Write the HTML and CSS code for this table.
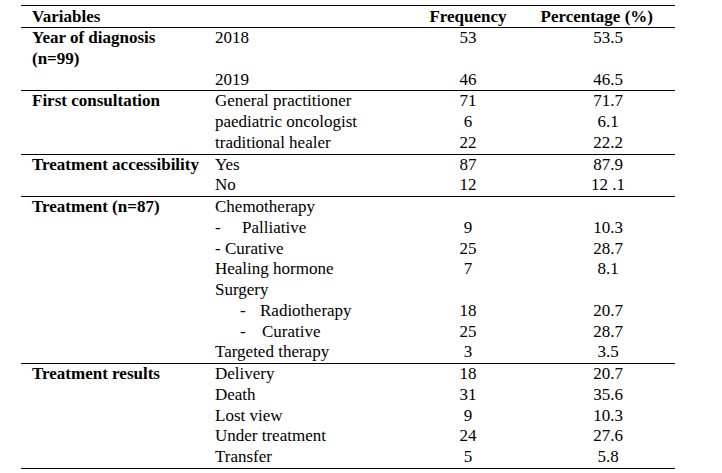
FILE: index.html
```html
<!DOCTYPE html>
<html>
<head>
<meta charset="utf-8">
<link rel="stylesheet" href="styles.css">
</head>
<body>
<table class="tbl">
  <colgroup>
    <col class="c1"><col class="c2"><col class="c3"><col class="c4">
  </colgroup>
  <thead>
    <tr class="head">
      <th class="var">Variables</th>
      <th></th>
      <th class="freq">Frequency</th>
      <th class="pct">Percentage (%)</th>
    </tr>
  </thead>
  <tbody class="grp">
    <tr><td class="label">Year of diagnosis (n=99)</td><td class="cat">2018</td><td class="num">53</td><td class="p">53.5</td></tr>
    <tr><td></td><td class="cat">2019</td><td class="num">46</td><td class="p">46.5</td></tr>
  </tbody>
  <tbody class="grp">
    <tr><td class="label">First consultation</td><td class="cat">General practitioner</td><td class="num">71</td><td class="p">71.7</td></tr>
    <tr><td></td><td class="cat">paediatric oncologist</td><td class="num">6</td><td class="p">6.1</td></tr>
    <tr><td></td><td class="cat">traditional healer</td><td class="num">22</td><td class="p">22.2</td></tr>
  </tbody>
  <tbody class="grp">
    <tr><td class="label">Treatment accessibility</td><td class="cat">Yes</td><td class="num">87</td><td class="p">87.9</td></tr>
    <tr><td></td><td class="cat">No</td><td class="num">12</td><td class="p">12 .1</td></tr>
  </tbody>
  <tbody class="grp">
    <tr><td class="label">Treatment (n=87)</td><td class="cat">Chemotherapy</td><td class="num"></td><td class="p"></td></tr>
    <tr><td></td><td class="cat"><span class="dash d0">-</span>Palliative</td><td class="num">9</td><td class="p">10.3</td></tr>
    <tr><td></td><td class="cat">- Curative</td><td class="num">25</td><td class="p">28.7</td></tr>
    <tr><td></td><td class="cat">Healing hormone</td><td class="num">7</td><td class="p">8.1</td></tr>
    <tr><td></td><td class="cat">Surgery</td><td class="num"></td><td class="p"></td></tr>
    <tr><td></td><td class="cat"><span class="dash d1">-</span>Radiotherapy</td><td class="num">18</td><td class="p">20.7</td></tr>
    <tr><td></td><td class="cat"><span class="dash d1 d2">-</span>Curative</td><td class="num">25</td><td class="p">28.7</td></tr>
    <tr><td></td><td class="cat">Targeted therapy</td><td class="num">3</td><td class="p">3.5</td></tr>
  </tbody>
  <tbody class="grp last">
    <tr><td class="label">Treatment results</td><td class="cat">Delivery</td><td class="num">18</td><td class="p">20.7</td></tr>
    <tr><td></td><td class="cat">Death</td><td class="num">31</td><td class="p">35.6</td></tr>
    <tr><td></td><td class="cat">Lost view</td><td class="num">9</td><td class="p">10.3</td></tr>
    <tr><td></td><td class="cat">Under treatment</td><td class="num">24</td><td class="p">27.6</td></tr>
    <tr><td></td><td class="cat">Transfer</td><td class="num">5</td><td class="p">5.8</td></tr>
  </tbody>
</table>
</body>
</html>
```
FILE: styles.css
```css
html, body {
  background: #fff;
}
body {
  margin: 0;
  padding: 5px 0 0 21px;
  font-family: "Liberation Serif", "Times New Roman", Times, serif;
  font-size: 17px;
  color: #000;
}
.tbl {
  font-family: "Liberation Serif", "Times New Roman", Times, serif;
  font-size: 17px;
  border-collapse: collapse;
  table-layout: fixed;
  width: 654px;
  border-top: 1px solid #000;
}
.c1 { width: 187px; }
.c2 { width: 200px; }
.c3 { width: 120px; }
.c4 { width: 147px; }
th, td {
  padding: 0;
  line-height: 20.75px;
  vertical-align: top;
  text-align: left;
}
th {
  font-weight: bold;
}
.head th {
  height: 21px;
  line-height: 21px;
}
.var {
  padding-left: 11px;
}
.freq {
  text-align: center;
}
.pct {
  text-align: right;
  padding-right: 22px;
}
.grp {
  border-top: 1px solid #000;
}
.last {
  border-bottom: 1px solid #000;
}
.label {
  font-weight: bold;
  padding-left: 11px;
  padding-right: 4px;
}
.cat {
  padding-left: 7px;
  white-space: nowrap;
}
.num {
  text-align: center;
}
.p {
  text-align: center;
  padding-left: 13px;
}
.dash {
  display: inline-block;
}
.d0 { width: 27px; }
.d1 { margin-left: 25px; width: 20px; }
.d2 { width: 22px; }
```
